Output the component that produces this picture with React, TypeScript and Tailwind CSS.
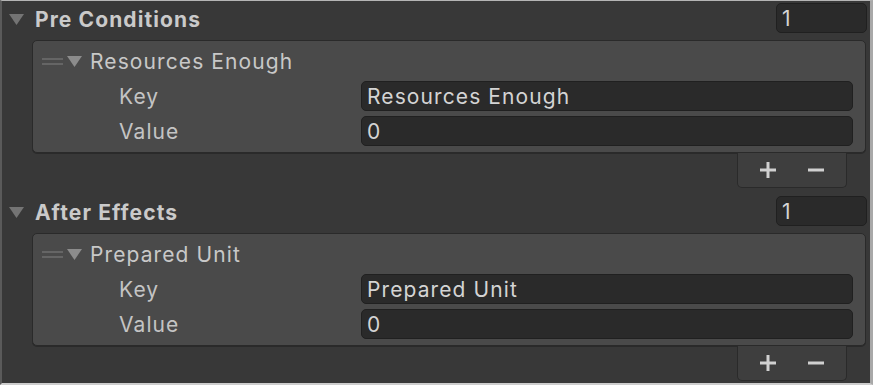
import React from 'react'

const Triangle = ({ className }: { className?: string }) => (
	<svg width="15" height="11" viewBox="0 0 15 11" className={className}>
		<path d="M0 0H15L7.5 11Z" fill="currentColor" />
	</svg>
)

function InputField({ value }: { value: string }) {
	return (
		<div className="flex h-[30px] flex-1 items-center rounded-[5px] border border-[#202020] bg-[#2a2a2a] pl-[5px] text-[#d4d4d4]">
			{value}
		</div>
	)
}

function PropertyRow({ label, value }: { label: string; value: string }) {
	return (
		<div className="flex h-[30px] items-center pr-[12px]">
			<div className="w-[328px] shrink-0 pl-[86px] text-[#c4c4c4]">{label}</div>
			<InputField value={value} />
		</div>
	)
}

function ListSection({ title, item }: { title: string; item: string }) {
	return (
		<div className="flex h-[193px] flex-col">
			<div className="flex h-[39px] items-start">
				<div className="flex h-[36px] flex-1 items-center">
					<Triangle className="ml-[7px] text-[#747474]" />
					<span className="ml-[11px] font-bold text-[#cacaca]">{title}</span>
				</div>
				<div className="mr-[3px] mt-[2px] flex h-[30px] w-[91px] items-center rounded-[5px] border border-[#202020] bg-[#2a2a2a] pl-[5px] text-[#d4d4d4]">
					1
				</div>
			</div>
			<div className="ml-[30px] mr-[4px] flex h-[113px] flex-col rounded-[5px] border border-[#2a2a2a] bg-[#4a4a4a] shadow-[0_1px_0_#2a2a2a]">
				<div className="flex h-[40px] items-center">
					<div className="ml-[9px] flex w-[21px] flex-col gap-[3px]">
						<div className="h-[2px] bg-[#656565]" />
						<div className="h-[2px] bg-[#656565]" />
					</div>
					<Triangle className="ml-[4px] text-[#8c8c8c]" />
					<span className="ml-[8px] text-[#c8c8c8]">{item}</span>
				</div>
				<PropertyRow label="Key" value={item} />
				<div className="h-[5px]" />
				<PropertyRow label="Value" value="0" />
			</div>
			<div className="mr-[23px] flex h-[35px] w-[110px] items-center self-end rounded-b-[5px] border border-t-0 border-[#2a2a2a] bg-[#3e3e3e]">
				<svg width="16" height="16" viewBox="0 0 16 16" className="ml-[22px] text-[#d0d0d0]">
					<path d="M0 6.5H16V9.5H0Z M6.5 0H9.5V16H6.5Z" fill="currentColor" />
				</svg>
				<svg width="16" height="16" viewBox="0 0 16 16" className="ml-[32px] text-[#d0d0d0]">
					<path d="M0 6.5H16V9.5H0Z" fill="currentColor" />
				</svg>
			</div>
		</div>
	)
}

export default function App() {
	return (
		<div className="h-[385px] w-[873px] overflow-hidden border-b-2 border-l-2 border-r-[3px] border-t border-b-[#cdcdcd] border-l-[#5a5a5a] border-r-[#a8a8a8] border-t-[#b5b5b5] bg-[#383838] font-['Inter',sans-serif] text-[21px] leading-none tracking-[1.1px]">
			<ListSection title="Pre Conditions" item="Resources Enough" />
			<ListSection title="After Effects" item="Prepared Unit" />
		</div>
	)
}
